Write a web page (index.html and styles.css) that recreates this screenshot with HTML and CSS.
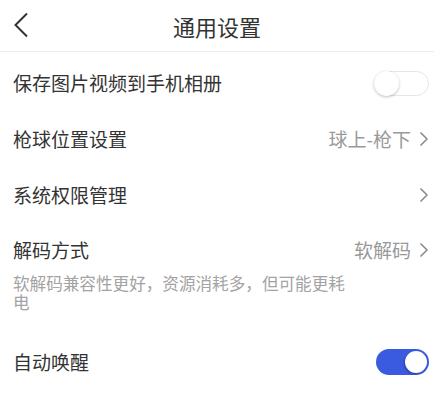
FILE: index.html
```html
<!DOCTYPE html>
<html lang="zh-CN">
<head>
<meta charset="utf-8">
<title>通用设置</title>
<link rel="stylesheet" href="styles.css">
</head>
<body>
<div class="page">
  <header class="topbar">
    <span class="back">
      <svg width="16" height="26" viewBox="0 0 16 26"><polyline points="14,1.5 2.5,13 14,24.5" fill="none" stroke="#333" stroke-width="2"/></svg>
    </span>
    <h1 class="title">通用设置</h1>
  </header>
  <main class="list">
    <div class="row">
      <span class="label">保存图片视频到手机相册</span>
      <span class="switch"><span class="knob"></span></span>
    </div>
    <div class="row">
      <span class="label">枪球位置设置</span>
      <span class="value">球上-枪下<svg class="chev" width="10" height="16" viewBox="0 0 10 16"><polyline points="1.5,1.5 8,8 1.5,14.5" fill="none" stroke="#8a8a8a" stroke-width="1.5"/></svg></span>
    </div>
    <div class="row">
      <span class="label">系统权限管理</span>
      <span class="value"><svg class="chev" width="10" height="16" viewBox="0 0 10 16"><polyline points="1.5,1.5 8,8 1.5,14.5" fill="none" stroke="#8a8a8a" stroke-width="1.5"/></svg></span>
    </div>
    <div class="row tall">
      <div class="head">
        <span class="label">解码方式</span>
        <span class="value">软解码<svg class="chev" width="10" height="16" viewBox="0 0 10 16"><polyline points="1.5,1.5 8,8 1.5,14.5" fill="none" stroke="#8a8a8a" stroke-width="1.5"/></svg></span>
      </div>
      <p class="desc">软解码兼容性更好，资源消耗多，但可能更耗电</p>
    </div>
    <div class="row">
      <span class="label">自动唤醒</span>
      <span class="switch on"><span class="knob"></span></span>
    </div>
  </main>
</div>
</body>
</html>
```
FILE: styles.css
```css
html, body {
  margin: 0;
  padding: 0;
  background: #fff;
}
body {
  font-family: "Noto Sans CJK SC", "Noto Sans", sans-serif;
  color: #333;
}
.page {
  width: 434px;
}
.topbar {
  height: 51px;
  border-bottom: 1px solid #ebebeb;
  display: flex;
  align-items: center;
  justify-content: center;
  position: relative;
}
.back {
  position: absolute;
  left: 13px;
  top: 12px;
  display: flex;
}
.title {
  margin: 0;
  font-size: 22px;
  font-weight: normal;
  color: #333;
  line-height: 30px;
}
.list {
  padding-top: 3px;
}
.row {
  height: 56px;
  display: flex;
  align-items: center;
  justify-content: space-between;
  padding: 0 5px 0 13px;
}
.label {
  font-size: 19px;
  line-height: 24px;
  color: #333;
}
.value {
  display: flex;
  align-items: center;
  font-size: 19px;
  line-height: 24px;
  color: #999;
}
.chev {
  margin-left: 8px;
}
.row.tall {
  height: auto;
  display: block;
  padding-top: 15px;
  padding-bottom: 22px;
}
.head {
  display: flex;
  justify-content: space-between;
  align-items: center;
}
.desc {
  margin: 12px 0 0;
  width: 340px;
  font-size: 16.6px;
  line-height: 19px;
  color: #a3a3a3;
}
.switch {
  width: 55px;
  height: 25px;
  box-sizing: border-box;
  border: 1px solid #e6e6e6;
  border-radius: 13px;
  background: #fff;
  display: flex;
  align-items: center;
  position: relative;
}
.switch .knob {
  width: 25px;
  height: 25px;
  border-radius: 50%;
  background: #fff;
  box-shadow: 0 1px 3px rgba(0,0,0,0.25);
  margin-left: -1px;
}
.switch.on {
  width: 53px;
  height: 26px;
  border: none;
  background: #3a5be0;
  justify-content: flex-end;
  padding-right: 2px;
}
.switch.on .knob {
  width: 22px;
  height: 22px;
  margin-left: 0;
  box-shadow: -1px 1px 2px rgba(0,0,60,0.3);
}
```
